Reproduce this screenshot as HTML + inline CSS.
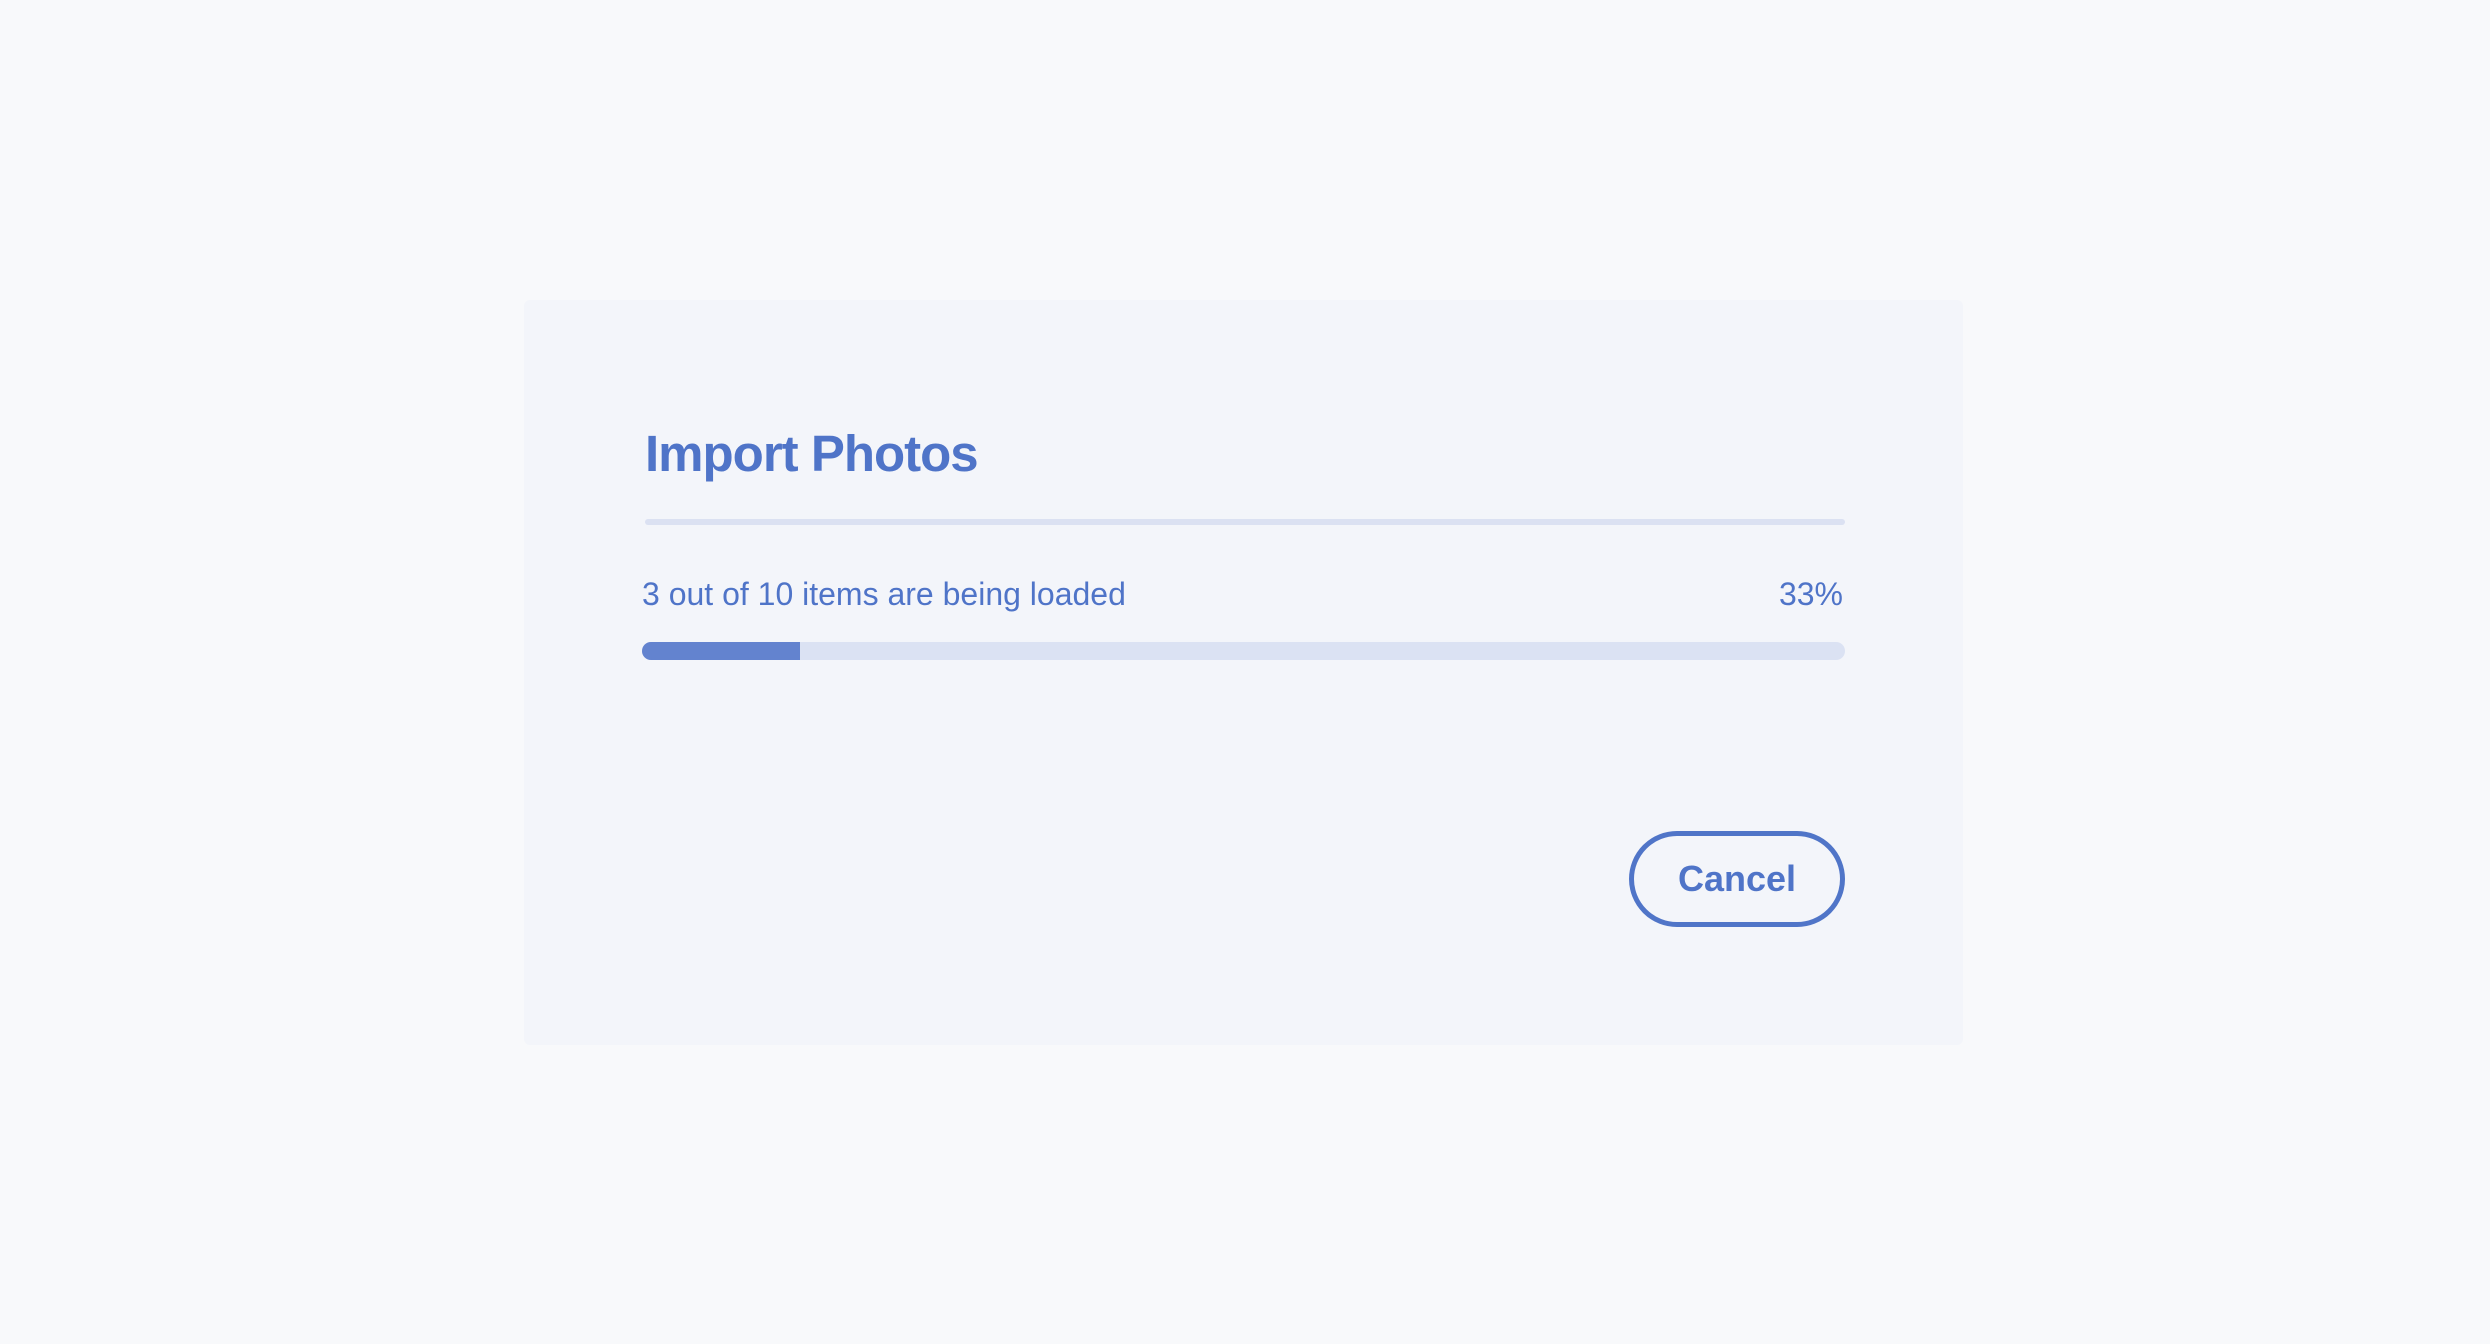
<!DOCTYPE html>
<html><head><style>
html,body{margin:0;padding:0}
body{width:2490px;height:1344px;background:#f8f9fb;position:relative;overflow:hidden;font-family:"Liberation Sans",sans-serif;color:#5075c8}
.dlg{position:absolute;left:524px;top:300px;width:1439px;height:745px;background:#f3f5fa;border-radius:6px}
.t{position:absolute;left:645px;top:424px;font-size:51px;font-weight:bold;line-height:60px;color:#4f74c8;letter-spacing:-1px}
.div{position:absolute;left:645px;top:519px;width:1200px;height:6px;background:#dbe1f2;border-radius:3px}
.lbl{position:absolute;left:642px;top:572px;font-size:32px;line-height:44px;color:#4f74c8}
.pct{position:absolute;right:647px;top:572px;font-size:32px;line-height:44px;color:#4f74c8}
.bar{position:absolute;left:642px;top:642px;width:1203px;height:18px;background:#dbe2f3;border-radius:9px;overflow:hidden}
.fill{width:158px;height:100%;background:#6383cf}
.btn{position:absolute;left:1629px;top:831px;width:206px;height:86px;border:5px solid #5075c8;border-radius:48px;box-sizing:content-box;text-align:center;line-height:86px;font-size:36px;font-weight:bold;color:#4f74c8}
</style></head><body>
<div class="dlg"></div>
<div class="t">Import Photos</div>
<div class="div"></div>
<div class="lbl">3 out of 10 items are being loaded</div>
<div class="pct">33%</div>
<div class="bar"><div class="fill"></div></div>
<div class="btn">Cancel</div>
</body></html>
